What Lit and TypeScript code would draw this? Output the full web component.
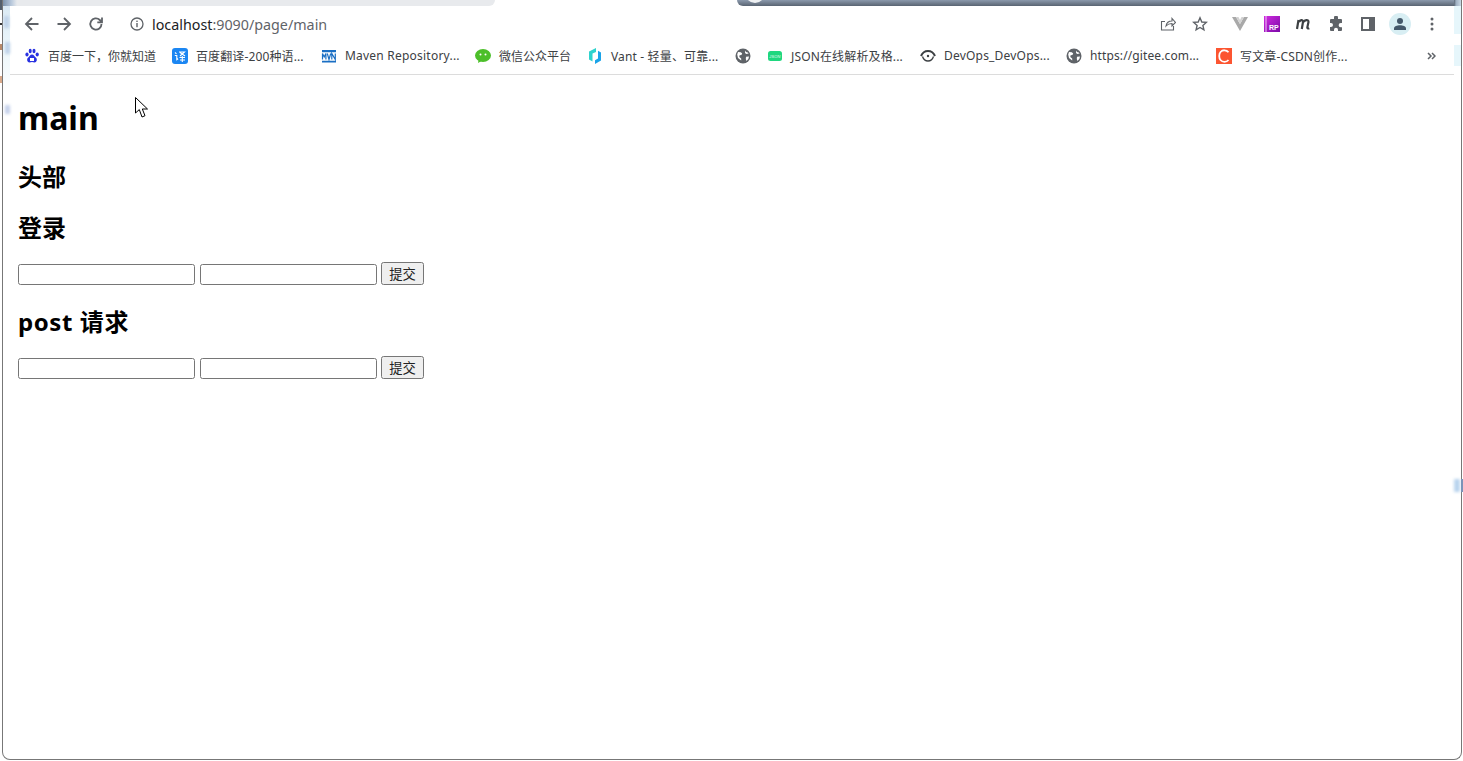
import { LitElement, html, css, svg } from "lit";
import { customElement } from "lit/decorators.js";

const globe = svg`<svg width="16" height="16" viewBox="0 0 16 16"><circle cx="8" cy="8" r="7.500" fill="#5f6368"/><path d="M3 4l2.800.2 1.400 1.400-.8 1.500-1.800.2-.3 1.700 1.900 1.400v2L3 10 2.200 6.500zM10.300 2.500l.8 1.600 1.700.4.900 1-2.400.6-1.300-1zM11 8.800l3-.2-.6 2.400-2 1.900-.6-2z" fill="#fff"/></svg>`;

const bookmarks = [
  { w: 148, ls: 0, t: "百度一下，你就知道", i: svg`<svg width="16" height="16" viewBox="0 0 16 16" fill="#2932e1"><ellipse cx="3" cy="6.500" rx="1.600" ry="2"/><ellipse cx="6.200" cy="3" rx="1.500" ry="2.200"/><ellipse cx="10" cy="3" rx="1.500" ry="2.200"/><ellipse cx="13.200" cy="6.500" rx="1.600" ry="2"/><path d="M8 6.500c2 0 2.500 2 4 3.300 1.600 1.400.8 4.700-1.500 4.700-1 0-1.700-.4-2.500-.4s-1.500.4-2.500.4C3.200 14.500 2.400 11.200 4 9.800 5.500 8.500 6 6.500 8 6.500z"/><rect x="6" y="10" width="4" height="3" fill="#fff"/></svg>` },
  { w: 149, ls: 0.12, t: "百度翻译-200种语...", i: svg`<svg width="16" height="16" viewBox="0 0 16 16"><rect width="16" height="16" rx="3" fill="#1b86f2"/><path d="M3 4.500l1.500 1.300M2.800 7.500h2v4.200l1.300-1M7 4h5.500L8 8M8 4.500l5 3.500M7.500 9.500h5.500M8 12h5M10.300 8v6" stroke="#fff" stroke-width="1.100" fill="none"/></svg>` },
  { w: 154, ls: 0.22, t: "Maven Repository...", i: svg`<svg width="16" height="16" viewBox="0 0 16 16"><path d="M1 2h14v2.200H1zM1 12.800h14v1.700H1z" fill="#1a6fc4"/><path d="M1.500 11.500V5.500L3.200 9l1.700-3.500v6M6.300 5.500L8 11.500l1.700-6M10.800 11.500V5.500l3.500 6v-6" fill="none" stroke="#1a6fc4" stroke-width="1.200"/></svg>` },
  { w: 112, ls: 0, t: "微信公众平台", i: svg`<svg width="16" height="16" viewBox="0 0 16 16"><ellipse cx="8" cy="7.500" rx="8" ry="6.500" fill="#4cbf2a"/><path d="M3.500 12l-.5 3 3.500-2z" fill="#4cbf2a"/><circle cx="5.500" cy="6.500" r="1" fill="#fff"/><circle cx="10.500" cy="6.500" r="1" fill="#fff"/></svg>` },
  { w: 148, ls: 0.15, t: "Vant - 轻量、可靠...", i: svg`<svg width="16" height="16" viewBox="0 0 16 16"><path d="M9 0L2 3.500v8l3.500 2V5.500L9 4z" fill="#2fd3cd"/><path d="M8 16l6-3.500v-8l-3-1.700v7.700l-3 1.700z" fill="#1aa3e8"/></svg>` },
  { w: 32, ls: 0, t: "", i: globe },
  { w: 153, ls: 0.15, t: "JSON在线解析及格...", i: svg`<svg width="16" height="16" viewBox="0 0 16 16"><rect x="1" y="3" width="14" height="10" rx="2.500" fill="#1fd77f"/><text x="8" y="9.600" font-size="4" text-anchor="middle" fill="#e4fcef" font-family="Liberation Sans" font-style="italic">JSON</text></svg>` },
  { w: 146, ls: 0.2, t: "DevOps_DevOps...", i: svg`<svg width="16" height="16" viewBox="0 0 16 16" fill="none" stroke="#3c4043"><path d="M1 8c1.500-3.500 4-5 7-5s5.500 1.500 7 5" stroke-width="2"/><path d="M2.500 8.500C3.500 11.500 5.500 13 8 13s4.500-1.500 5.500-4.500" stroke-width="1.300"/><circle cx="8" cy="8" r="1.200" fill="#3c4043" stroke="none"/></svg>` },
  { w: 150, ls: 0.12, t: "https://gitee.com...", i: globe },
  { w: 190, ls: 0.15, t: "写文章-CSDN创作...", i: svg`<svg width="16" height="16" viewBox="0 0 16 16"><rect width="16" height="16" fill="#fc5531"/><path d="M12.500 4.200A5.300 5.300 0 0 0 4.500 4C2.800 5.800 2.800 10 4.500 12a5.300 5.300 0 0 0 8 0" fill="none" stroke="#fff" stroke-width="1.800"/></svg>` },
];

const arrow = (d: string) => svg`<svg width="16" height="16" viewBox="0 0 16 16" fill="none" stroke="#5f6368" stroke-width="1.800"><path d=${d}/></svg>`;

@customElement("app-root")
export class AppRoot extends LitElement {
  static styles = css`
    :host {
      display: block;
      position: relative;
      width: 1463px;
      height: 761px;
      overflow: hidden;
      background: #fff;
      font-family: "Noto Sans", "Noto Sans CJK SC", sans-serif;
      color: #000;
    }
    .window {
      box-sizing: border-box;
      width: 1460px;
      height: 760px;
      margin-left: 2px;
      border: 1px solid #777;
      border-top: 0;
      border-radius: 0 0 8px 8px;
      overflow: hidden;
      background: #fff;
      position: relative;
    }
    .tabs { display: flex; height: 6px; background: #fff; padding-left: 7px; }
    .tab-a { width: 485px; background: #e8eaed; border-radius: 0 0 8px 0; }
    .tab-b {
      width: 717px; margin-left: 242px;
      background: linear-gradient(#8b99ac, #596472);
      border-radius: 0 0 0 6px;
      position: relative;
      overflow: hidden;
    }
    .tab-fade {
      flex: 1;
      background: linear-gradient(90deg, #596472, #9fb0c2 30%, #c9d8e4);
    }
    .knob { position: absolute; width: 20px; height: 20px; border-radius: 50%; background: #eef0f2; top: -17px; }
    .toolbar { display: flex; align-items: center; height: 36px; padding-left: 13px; padding-right: 13px; }
    .nav { width: 32px; height: 36px; display: flex; align-items: center; justify-content: center; flex: none; }
    .url { display: flex; align-items: center; margin-left: 18px; flex: 1; font-size: 14.300px; color: #5f6368; }
    .url b { font-weight: 400; color: #202124; }
    .url svg { margin-right: 8px; }
    .gap { margin-left: 8px; }
    .bar { box-sizing: border-box; display: flex; align-items: center; height: 33px; margin: 0 7px; padding: 0 0 5px 14px; border-bottom: 1px solid #dcdcdc; }
    .mark { display: flex; align-items: center; gap: 8px; flex: none; font-size: 12px; color: #3c4043; white-space: nowrap; }
    .mark svg { flex: none; }
    .more { margin-left: auto; width: 50px; font-size: 0; display: flex; justify-content: flex-end; padding-right: 18px; box-sizing: border-box; }
    .avatar { width: 22px; height: 22px; border-radius: 50%; background: #d8eef3; display: flex; align-items: center; justify-content: center; }
    .page { padding: 21px 0 0 15px; }
    h1 { margin: 0 0 22px; font-size: 32px; line-height: 44px; font-weight: 700; }
    h2 { margin: 0 0 21px; font-size: 24px; line-height: 30px; font-weight: 700; }
    h2.tight { margin-bottom: 19px; }
    h2.latin { letter-spacing: 0.6px; }
    form { display: flex; align-items: flex-end; margin: 0 0 22px; height: 23px; }
    input {
      box-sizing: border-box; width: 177px; height: 21px; margin: 0 5px 0 0; padding: 1px 2px;
      border: 1px solid #767676; border-radius: 2.500px; background: #fff;
    }
    input + input { margin-right: 4px; }
    button {
      box-sizing: border-box; width: 43px; height: 23px; padding: 0; margin: 0;
      border: 1px solid #767676; border-radius: 2.500px; background: #efefef;
      font: 13.330px "Noto Sans CJK SC", sans-serif; color: #222;
    }
    .cursor { position: absolute; left: 135px; top: 97px; }
    .spot { position: absolute; }
    .corner { left: 3px; top: 0; width: 14px; height: 6px; background: linear-gradient(90deg, #7f95ad, #b9c9dc 60%, #e8eaed); }
    .side-l { left: 3px; top: 6px; width: 7px; height: 88px; background: linear-gradient(#dbeaf4, #edf7fb 50%, #f6fbfd 80%, #fff); }
    .blot { filter: blur(1.500px); background: #bed2e8; }
    .b1 { left: 4px; top: 16px; width: 5px; height: 12px; }
    .b2 { left: 5px; top: 42px; width: 5px; height: 12px; }
    .b3 { left: 5px; top: 105px; width: 5px; height: 9px; background: #c4d0ea; }
    .b4 { left: 1454px; top: 479px; width: 6px; height: 13px; background: #b9d4ee; }
    .edge { left: 0; width: 2px; }
    .e1 { top: 0; height: 10px; background: #55606c; }
    .e2 { top: 23px; height: 2px; background: #333; }
    .e3 { top: 44px; height: 6px; background: #b98a6a; }
    .e4 { top: 76px; height: 7px; background: #d8a98a; }
    .side-r1 { left: 1454px; top: 6px; width: 7px; height: 28px; background: #e6f6fb; }
    .side-r2 { left: 1454px; top: 45px; width: 7px; height: 21px; background: #e6f6fb; }
    .r-mark { left: 1461px; top: 479px; width: 2px; height: 13px; background: #7b93b8; }
  `;

  private form() {
    return html`<form><input type="text" /><input type="text" /><button type="button">提交</button></form>`;
  }

  render() {
    return html`
      <div class="window">
        <div class="tabs">
          <div class="tab-a"></div>
          <div class="tab-b"><div class="knob" style="left: 8px"></div></div>
          <div class="tab-fade"></div>
        </div>
        <div class="toolbar">
          <div class="nav">${arrow("M14.500 8H2M8 2L2 8l6 6")}</div>
          <div class="nav">${arrow("M1.500 8H14M8 2l6 6-6 6")}</div>
          <div class="nav">${arrow("M13.500 8a5.600 5.600 0 1 1-1.700-4L14 6.200M14 1.500v4.800H9.300")}</div>
          <div class="url">
            <svg width="14" height="14" viewBox="0 0 14 14"><circle cx="7" cy="7" r="6" fill="none" stroke="#5f6368" stroke-width="1.300"/><rect x="6.300" y="6" width="1.400" height="4.200" fill="#5f6368"/><rect x="6.300" y="3.600" width="1.400" height="1.400" fill="#5f6368"/></svg>
            <span><b>localhost</b>:9090/page/main</span>
          </div>
          <div class="nav">
            <svg width="16" height="16" viewBox="0 0 16 16" fill="none" stroke="#5f6368" stroke-width="1.100"><path d="M13.500 10v4H1.500V5.500H5M6 10c.5-3 2.500-5 6-5V2.500L15.500 6.500 12 10V7.500c-2.500 0-4.500.8-6 2.500z"/></svg>
          </div>
          <div class="nav">
            <svg width="16" height="16" viewBox="0 0 16 16" fill="none" stroke="#5f6368" stroke-width="1.400"><path d="M8 1.800l1.800 4.200 4.500.4-3.400 3 1 4.400L8 11.500 4.100 13.800l1-4.400-3.400-3 4.500-.4z"/></svg>
          </div>
          <div class="nav gap">
            <svg width="16" height="14" viewBox="0 0 16 14"><path d="M0 0h4l4 7 4-7h4L8 14z" fill="#a9a9a9"/><path d="M4 0h2.500L8 3l1.500-3H12L8 7z" fill="#d2d2d2"/></svg>
          </div>
          <div class="nav">
            <svg width="16" height="16" viewBox="0 0 16 16"><defs><linearGradient id="rp" x1="0" y1="0" x2="1" y2="1"><stop offset="0" stop-color="#d02be0"/><stop offset="1" stop-color="#7c0aa8"/></linearGradient></defs><rect width="16" height="16" fill="url(#rp)"/><rect x="1.500" width="1" height="16" fill="#f0c8f5"/><text x="5" y="14" font-size="7" font-weight="700" fill="#fff" font-family="Liberation Sans">RP</text></svg>
          </div>
          <div class="nav">
            <svg width="16" height="12" viewBox="0 0 16 12" fill="none" stroke="#3c4043" stroke-width="2.200"><path d="M2.500 2l-1.500 9M3 4c1-2 4-3 4 0l-1.200 7M7.500 4c1-2 5-3 5 0l-1.200 5.500c0 1 1 1.200 2 .8"/></svg>
          </div>
          <div class="nav">
            <svg width="16" height="16" viewBox="0 0 16 16" fill="#5f6368"><path d="M6 1.500a2 2 0 0 1 4 0V3h3a1 1 0 0 1 1 1v3h-1.200a2.100 2.100 0 0 0 0 4.300H14V14a1 1 0 0 1-1 1h-3v-1.200a2 2 0 0 0-4 0V15H3a1 1 0 0 1-1-1v-3h1a2 2 0 0 0 0-4H2V4a1 1 0 0 1 1-1h3z"/></svg>
          </div>
          <div class="nav">
            <svg width="14" height="14" viewBox="0 0 14 14"><path d="M0 0h14v14H0zM2 2v10h6V2z" fill="#5f6368" fill-rule="evenodd"/></svg>
          </div>
          <div class="nav">
            <div class="avatar">
              <svg width="14" height="14" viewBox="0 0 14 14" fill="#44586a"><circle cx="7" cy="4" r="3"/><path d="M1 13v-1.500C1 9.500 4 8.300 7 8.300s6 1.200 6 3.200V13z"/></svg>
            </div>
          </div>
          <div class="nav">
            <svg width="4" height="14" viewBox="0 0 4 14" fill="#5f6368"><circle cx="2" cy="2" r="1.500"/><circle cx="2" cy="7" r="1.500"/><circle cx="2" cy="12" r="1.500"/></svg>
          </div>
        </div>
        <div class="bar">
          ${bookmarks.map(
            (b) => html`<div class="mark" style="width:${b.w}px;letter-spacing:${b.ls}px">${b.i}${b.t ? html`<span>${b.t}</span>` : ""}</div>`
          )}
          <div class="more">
            <svg width="9" height="8" viewBox="0 0 9 8" fill="none" stroke="#5f6368" stroke-width="1.500"><path d="M1 1l3 3-3 3M5 1l3 3-3 3"/></svg>
          </div>
        </div>
        <div class="page">
          <h1>main</h1>
          <h2>头部</h2>
          <h2 class="tight">登录</h2>
          ${this.form()}
          <h2 class="tight latin">post 请求</h2>
          ${this.form()}
        </div>
      </div>
      <div class="spot side-l"></div>
      <div class="spot corner"></div>
      <div class="spot blot b1"></div>
      <div class="spot blot b2"></div>
      <div class="spot blot b3"></div>
      <div class="spot blot b4"></div>
      <div class="spot edge e1"></div>
      <div class="spot edge e2"></div>
      <div class="spot edge e3"></div>
      <div class="spot edge e4"></div>
      <div class="spot side-r1"></div>
      <div class="spot side-r2"></div>
      <div class="spot r-mark"></div>
      <svg class="cursor" width="14" height="22" viewBox="0 0 14 22"><path d="M.5.500V16l3.800-3.400L7 20l3-1.300L7.300 12H12.500z" fill="#fff" stroke="#000"/></svg>
    `;
  }
}
